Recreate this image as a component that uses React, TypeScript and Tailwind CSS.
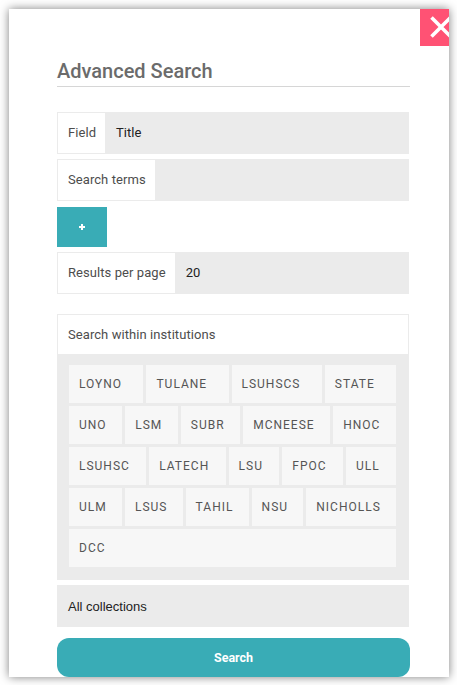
const institutions = [
  'LOYNO', 'TULANE', 'LSUHSCS', 'STATE', 'UNO', 'LSM', 'SUBR', 'MCNEESE', 'HNOC', 'LSUHSC',
  'LATECH', 'LSU', 'FPOC', 'ULL', 'ULM', 'LSUS', 'TAHIL', 'NSU', 'NICHOLLS', 'DCC',
];

function Row({ label, value }: { label: string; value?: string }) {
  return (
    <div className="flex h-[42px] w-[352px]">
      <div className="flex items-center border border-[#ebebeb] bg-white pl-[10px] pr-[9px] text-[13px] tracking-[0.07px] text-[#4d4d4d] whitespace-nowrap">
        {label}
      </div>
      <div className="flex flex-1 items-center bg-[#ebebeb] pl-[10px] text-[13px] text-[#222]">{value}</div>
    </div>
  );
}

export default function App() {
  return (
    <div className="h-[685px] w-[457px] bg-white p-[9px] font-['Roboto',sans-serif]">
      <div className="relative h-[668px] w-[440px] overflow-hidden bg-white px-[48px] shadow-[0_0_9px_rgba(0,0,0,0.5)]">
        <button className="absolute right-0 top-0 flex h-[37px] w-[29px] items-start overflow-hidden bg-[#ff5274] pl-[10px] pt-[7px]">
          <svg width="22" height="22" viewBox="0 0 22 22" className="shrink-0">
            <path d="M1.5 1.5 L20.5 20.5 M20.5 1.5 L1.5 20.5" stroke="white" strokeWidth="3.6" />
          </svg>
        </button>

        <h2 className="mt-[48px] h-[30px] w-[353px] border-b border-[#d6d6d6] text-[20px] leading-[28px] font-medium text-[#6b6b6b]">
          Advanced Search
        </h2>

        <div className="mt-[25px] flex flex-col gap-[5px]">
          <Row label="Field" value="Title" />
          <Row label="Search terms" />
        </div>

        <button className="mt-[6px] flex h-[40px] w-[50px] items-center justify-center bg-[#39acb6]">
          <svg width="8" height="8" viewBox="0 0 8 8">
            <path d="M4 1 V7 M1 4 H7" stroke="white" strokeWidth="2" />
          </svg>
        </button>

        <div className="mt-[5px]">
          <Row label="Results per page" value="20" />
        </div>

        <div className="mt-[20px] w-[352px] border-x border-t border-[#ebebeb]">
          <div className="flex h-[39px] items-center bg-white px-[10px] text-[13px] tracking-[0.07px] text-[#4d4d4d]">
            Search within institutions
          </div>
        </div>
        <div className="flex w-[352px] flex-wrap gap-[3px] bg-[#ebebeb] pb-[13px] pl-[12px] pr-[13px] pt-[11px]">
          {institutions.map((name) => (
            <div
              key={name}
              className="flex h-[38px] grow items-center bg-[#f7f7f7] pl-[10px] pr-[14px] text-[12px] tracking-[1px] text-[#555]"
            >
              {name}
            </div>
          ))}
        </div>

        <div className="mt-[5px] flex h-[42px] w-[352px] items-center bg-[#ebebeb] px-[11px] pt-px font-['Liberation_Sans',sans-serif] text-[13px] text-[#222]">
          All collections
        </div>

        <button className="mt-[11px] flex h-[39px] w-[353px] items-center justify-center rounded-[12px] bg-[#39acb6] pt-px text-[12.5px] font-bold text-white">
          Search
        </button>
      </div>
    </div>
  );
}
